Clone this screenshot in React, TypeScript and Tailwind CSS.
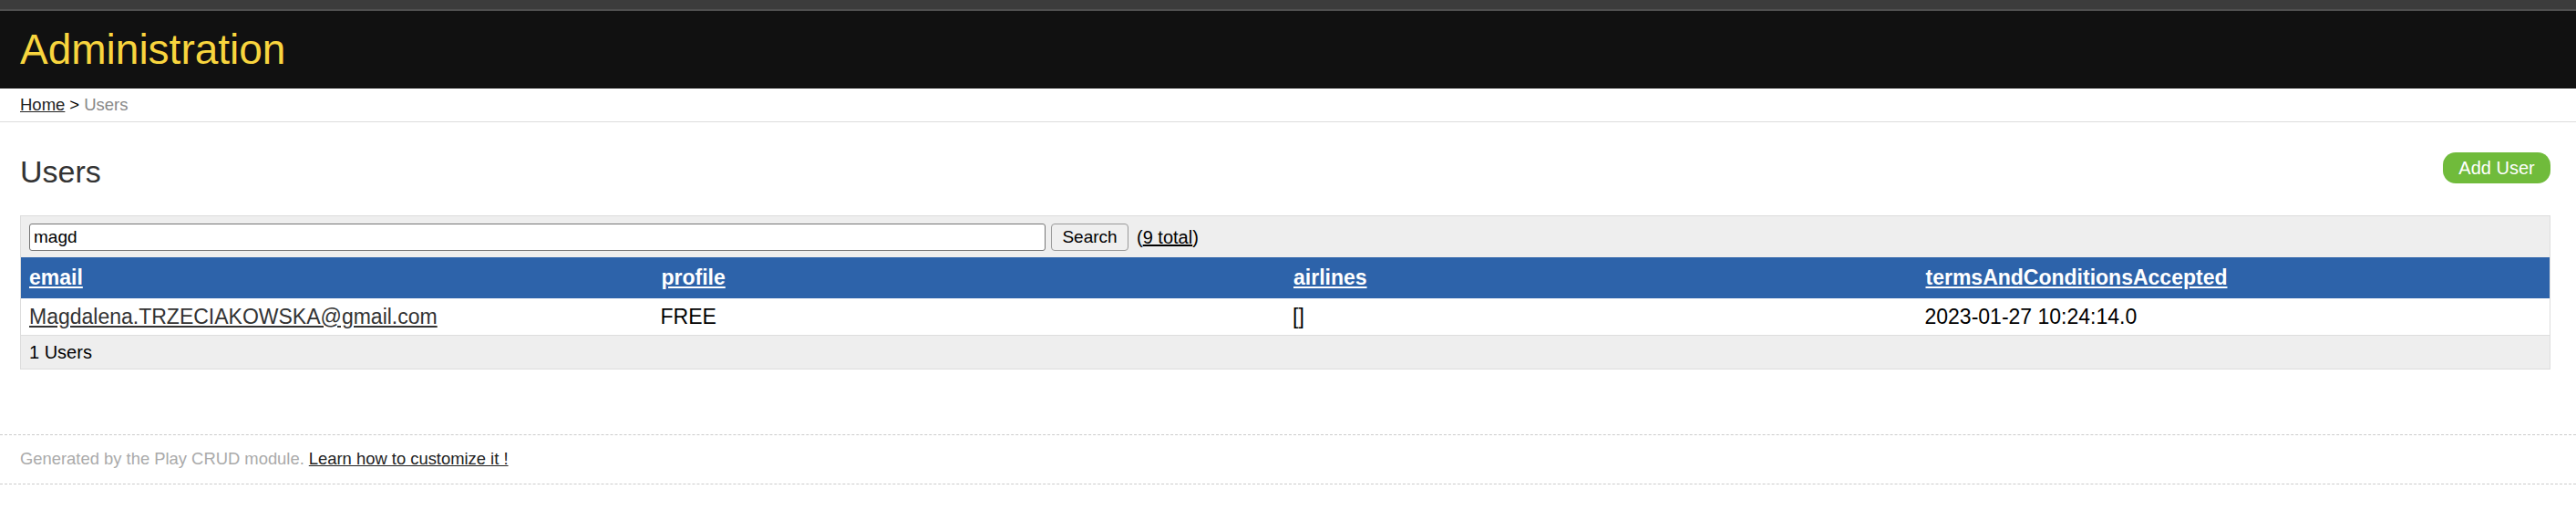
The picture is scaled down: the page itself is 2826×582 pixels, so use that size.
import React from 'react';

const columns = ['email', 'profile', 'airlines', 'termsAndConditionsAccepted'];

const users = [
    {
        email: 'Magdalena.TRZECIAKOWSKA@gmail.com',
        profile: 'FREE',
        airlines: '[]',
        terms: '2023-01-27 10:24:14.0',
    },
];

export default function App() {
    return (
        <div className="min-h-screen bg-white font-['Liberation_Sans',Arial,sans-serif] text-black">
            <div className="h-[12px] bg-[#3c3c3c] border-b-2 border-[#505050]" />
            <header className="h-[85px] bg-[#111111] flex items-center px-[22px]">
                <h1 className="text-[46px] leading-none text-[#f8d53e] -mt-[2px]">Administration</h1>
            </header>

            {/* fil d'ariane */}
            <div className="h-[37px] flex items-center px-[22px] border-b border-[#dddddd] text-[18.5px]">
                <a href="#" className="underline text-[#222]">Home</a>
                <span className="mx-[5px]">&gt;</span>
                <span className="text-[#888888]">Users</span>
            </div>

            <main className="pl-[22px] pr-[28px]">
                <div className="flex items-start justify-between pt-[33px] mb-[31px]">
                    <h2 className="text-[34px] leading-[34px] mt-[4px] text-[#333333]">Users</h2>
                    <a href="#" className="h-[34px] w-[118px] rounded-[14px] bg-[#70bb3b] text-white text-[20px] flex items-center justify-center">
                        Add User
                    </a>
                </div>

                <div className="border border-[#dddddd] bg-[#eeeeee]">
                    <div className="h-[45px] flex items-center px-[9px]">
                        <input
                            defaultValue="magd"
                            className="h-[30px] w-[1115px] bg-white border border-[#767676] rounded-[3px] px-[4px] text-[19px] outline-none"
                        />
                        <button className="ml-[6px] h-[30px] w-[85px] bg-[#efefef] border border-[#999999] rounded-[4px] text-[19px]">
                            Search
                        </button>
                        <span className="ml-[9px] text-[20px]">
                            (<a href="#" className="underline">9 total</a>)
                        </span>
                    </div>

                    <table className="w-full table-fixed border-collapse">
                        <thead>
                            <tr className="h-[45px] bg-[#2d63aa]">
                                {columns.map((col) => (
                                    <th key={col} className="text-left pl-[9px] text-[23px] font-bold text-white">
                                        <a href="#" className="underline">{col}</a>
                                    </th>
                                ))}
                            </tr>
                        </thead>
                        <tbody>
                            {users.map((u) => (
                                <tr key={u.email} className="h-[40px] bg-white border-b border-[#dddddd] text-[23px]">
                                    <td className="pl-[9px]">
                                        <a href="#" className="underline text-[#333333]">{u.email}</a>
                                    </td>
                                    <td className="pl-[8px]">{u.profile}</td>
                                    <td className="pl-[8px]">{u.airlines}</td>
                                    <td className="pl-[8px]">{u.terms}</td>
                                </tr>
                            ))}
                        </tbody>
                    </table>

                    <div className="h-[36px] flex items-center px-[9px] text-[20px]">1 Users</div>
                </div>
            </main>

            <footer className="mt-[71px] h-[55px] flex items-center px-[22px] border-y border-dashed border-[#cccccc] text-[18.4px] text-[#aaaaaa]">
                Generated by the Play CRUD module.
                <a href="#" className="ml-[5px] underline text-[#222222]">Learn how to customize it !</a>
            </footer>
        </div>
    );
}
